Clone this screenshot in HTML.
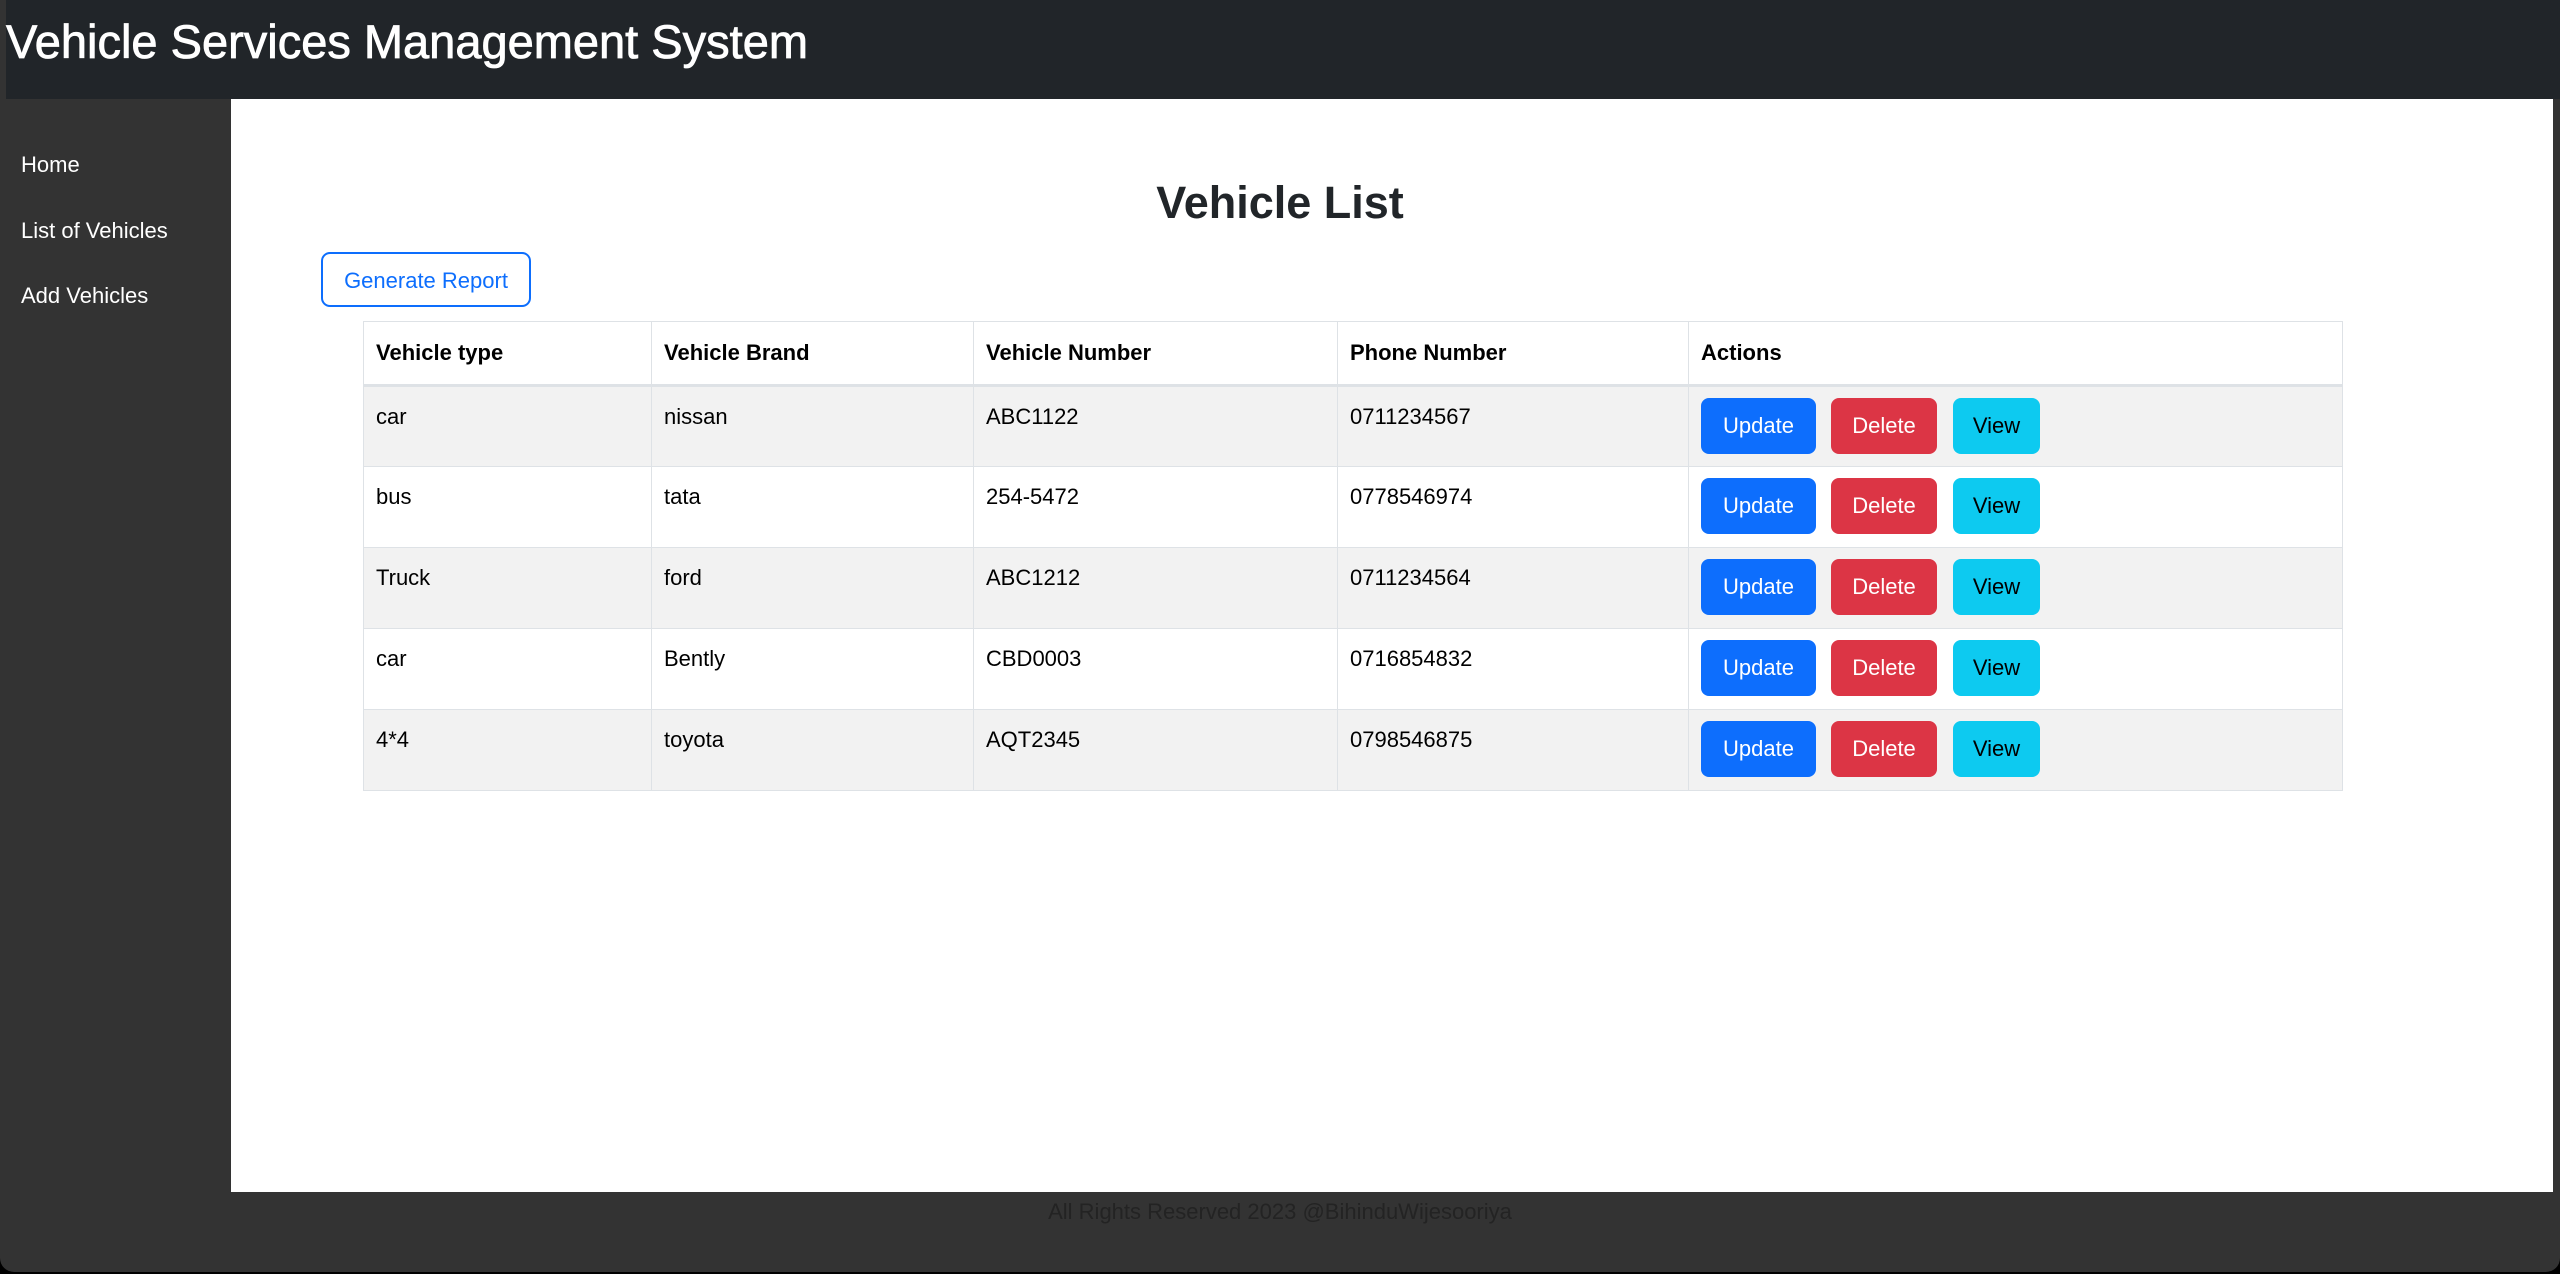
<!DOCTYPE html>
<html><head><meta charset="utf-8"><style>
*{box-sizing:border-box;margin:0;padding:0}
html,body{width:2560px;height:1274px;background:#000;overflow:hidden;font-family:"Liberation Sans",Arial,sans-serif}
.frame{position:absolute;left:0;top:0;width:2560px;height:1272px;background:#333;border-radius:0 0 14px 14px;overflow:hidden}
.hdr{position:absolute;left:6px;top:0;right:0;height:99px;background:#212529}
.hdr h1{position:absolute;left:0;top:14px;color:#fff;font-weight:normal;font-size:47px;letter-spacing:0px;line-height:56px;white-space:nowrap;-webkit-text-stroke:0.8px #fff}
.side a{position:absolute;left:21px;color:#fff;font-size:22px;text-decoration:none;white-space:nowrap}
.main{position:absolute;left:231px;top:99px;width:2322px;height:1093px;background:#fff}
.title{position:absolute;left:0;width:2560px;top:175px;text-align:center;font-size:45px;font-weight:bold;color:#212529;line-height:56px}
.gen{position:absolute;left:321px;top:252px;width:210px;height:55px;border:2px solid #0d6efd;border-radius:9px;color:#0d6efd;font-size:22px;text-align:center;line-height:53px;white-space:nowrap}
table{position:absolute;left:363px;top:321px;width:1980px;border-collapse:collapse;font-size:22px;color:#000}
td,th{border:1px solid #dee2e6;padding:0 12px;text-align:left;vertical-align:top;white-space:nowrap}
th{height:62px;font-weight:bold;line-height:62px;border-bottom:3px solid #dee2e6}
td{height:81px;line-height:22px;padding-top:19px}
tr.s td{background:#f2f2f2}
.b{display:inline-block;height:56px;line-height:56px;border-radius:8px;font-size:22px;text-align:center;margin-top:-8px;vertical-align:top}
.u{width:115px;background:#0d6efd;color:#fff}
.d{width:106px;background:#dc3545;color:#fff;margin-left:15px}
.v{width:87px;background:#0dcaf0;color:#000;margin-left:16px}
.foot{position:absolute;left:0;width:2560px;top:1199px;text-align:center;font-size:22px;color:#232323}
</style></head><body>
<div class="frame">
<div class="hdr"><h1>Vehicle Services Management System</h1></div>
<div class="side">
<a style="top:152px">Home</a>
<a style="top:218px">List of Vehicles</a>
<a style="top:283px">Add Vehicles</a>
</div>
<div class="main"></div>
<div class="title">Vehicle List</div>
<div class="gen">Generate Report</div>
<table>
<tr><th style="width:288px">Vehicle type</th><th style="width:322px">Vehicle Brand</th><th style="width:364px">Vehicle Number</th><th style="width:351px">Phone Number</th><th>Actions</th></tr>
<tr class="s"><td>car</td><td>nissan</td><td>ABC1122</td><td>0711234567</td><td><span class="b u">Update</span><span class="b d">Delete</span><span class="b v">View</span></td></tr>
<tr><td>bus</td><td>tata</td><td>254-5472</td><td>0778546974</td><td><span class="b u">Update</span><span class="b d">Delete</span><span class="b v">View</span></td></tr>
<tr class="s"><td>Truck</td><td>ford</td><td>ABC1212</td><td>0711234564</td><td><span class="b u">Update</span><span class="b d">Delete</span><span class="b v">View</span></td></tr>
<tr><td>car</td><td>Bently</td><td>CBD0003</td><td>0716854832</td><td><span class="b u">Update</span><span class="b d">Delete</span><span class="b v">View</span></td></tr>
<tr class="s"><td>4*4</td><td>toyota</td><td>AQT2345</td><td>0798546875</td><td><span class="b u">Update</span><span class="b d">Delete</span><span class="b v">View</span></td></tr>
</table>
<div class="foot">All Rights Reserved 2023 @BihinduWijesooriya</div>
</div>
</body></html>
